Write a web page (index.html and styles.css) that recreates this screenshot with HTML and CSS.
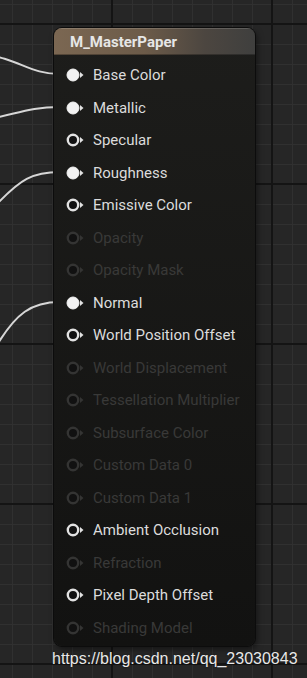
FILE: index.html
```html
<!DOCTYPE html>
<html lang="en">
<head>
    <meta charset="UTF-8">
    <meta name="viewport" content="width=device-width, initial-scale=1.0">
    <title>M_MasterPaper</title>
    <link rel="stylesheet" href="styles.css">
</head>
<body>
    <svg class="wires" width="70" height="678" viewBox="0 0 70 678">
        <path d="M-20,54 C20,58 28,74 60,74" />
        <path d="M-20,121 C18,114 28,107 60,107" />
        <path d="M-2,203 C20,180 32,172 60,172" />
        <path d="M-6,350 C16,312 32,302 60,302" />
    </svg>

    <div class="canvas">
        <div class="node">
            <div class="node-header">M_MasterPaper</div>
            <ul class="pins">
                <li class="pin linked"><svg class="pin-icon" viewBox="0 0 20 16"><circle cx="7" cy="8" r="6"/><polygon points="14,5 17.5,8 14,11"/></svg>Base Color</li>
                <li class="pin linked"><svg class="pin-icon" viewBox="0 0 20 16"><circle cx="7" cy="8" r="6"/><polygon points="14,5 17.5,8 14,11"/></svg>Metallic</li>
                <li class="pin"><svg class="pin-icon" viewBox="0 0 20 16"><circle cx="7" cy="8" r="5.2"/><polygon points="14,5 17.5,8 14,11"/></svg>Specular</li>
                <li class="pin linked"><svg class="pin-icon" viewBox="0 0 20 16"><circle cx="7" cy="8" r="6"/><polygon points="14,5 17.5,8 14,11"/></svg>Roughness</li>
                <li class="pin"><svg class="pin-icon" viewBox="0 0 20 16"><circle cx="7" cy="8" r="5.2"/><polygon points="14,5 17.5,8 14,11"/></svg>Emissive Color</li>
                <li class="pin off"><svg class="pin-icon" viewBox="0 0 20 16"><circle cx="7" cy="8" r="5.2"/><polygon points="14,5 17.5,8 14,11"/></svg>Opacity</li>
                <li class="pin off"><svg class="pin-icon" viewBox="0 0 20 16"><circle cx="7" cy="8" r="5.2"/><polygon points="14,5 17.5,8 14,11"/></svg>Opacity Mask</li>
                <li class="pin linked"><svg class="pin-icon" viewBox="0 0 20 16"><circle cx="7" cy="8" r="6"/><polygon points="14,5 17.5,8 14,11"/></svg>Normal</li>
                <li class="pin"><svg class="pin-icon" viewBox="0 0 20 16"><circle cx="7" cy="8" r="5.2"/><polygon points="14,5 17.5,8 14,11"/></svg>World Position Offset</li>
                <li class="pin off"><svg class="pin-icon" viewBox="0 0 20 16"><circle cx="7" cy="8" r="5.2"/><polygon points="14,5 17.5,8 14,11"/></svg>World Displacement</li>
                <li class="pin off"><svg class="pin-icon" viewBox="0 0 20 16"><circle cx="7" cy="8" r="5.2"/><polygon points="14,5 17.5,8 14,11"/></svg>Tessellation Multiplier</li>
                <li class="pin off"><svg class="pin-icon" viewBox="0 0 20 16"><circle cx="7" cy="8" r="5.2"/><polygon points="14,5 17.5,8 14,11"/></svg>Subsurface Color</li>
                <li class="pin off"><svg class="pin-icon" viewBox="0 0 20 16"><circle cx="7" cy="8" r="5.2"/><polygon points="14,5 17.5,8 14,11"/></svg>Custom Data 0</li>
                <li class="pin off"><svg class="pin-icon" viewBox="0 0 20 16"><circle cx="7" cy="8" r="5.2"/><polygon points="14,5 17.5,8 14,11"/></svg>Custom Data 1</li>
                <li class="pin"><svg class="pin-icon" viewBox="0 0 20 16"><circle cx="7" cy="8" r="5.2"/><polygon points="14,5 17.5,8 14,11"/></svg>Ambient Occlusion</li>
                <li class="pin off"><svg class="pin-icon" viewBox="0 0 20 16"><circle cx="7" cy="8" r="5.2"/><polygon points="14,5 17.5,8 14,11"/></svg>Refraction</li>
                <li class="pin"><svg class="pin-icon" viewBox="0 0 20 16"><circle cx="7" cy="8" r="5.2"/><polygon points="14,5 17.5,8 14,11"/></svg>Pixel Depth Offset</li>
                <li class="pin off"><svg class="pin-icon" viewBox="0 0 20 16"><circle cx="7" cy="8" r="5.2"/><polygon points="14,5 17.5,8 14,11"/></svg>Shading Model</li>
            </ul>
        </div>
        <div class="watermark">https://blog.csdn.net/qq_23030843</div>
    </div>
</body>
</html>
```

FILE: styles.css
```css
html, body {
    height: 100%;
}
body {
    margin: 0;
    overflow: hidden;
    font-family: Roboto, 'Noto Sans', sans-serif;
    background-color: #262626;
    background-image:
        linear-gradient(to right, #141414 2px, transparent 2px),
        linear-gradient(to bottom, #141414 2px, transparent 2px),
        linear-gradient(to right, #303030 1px, transparent 1px),
        linear-gradient(to bottom, #303030 1px, transparent 1px);
    background-size: 160px 160px, 160px 160px, 20px 20px, 20px 20px;
    background-position: 111px 0, 0 23px, 12px 0, 0 4px;
}
.wires {
    position: absolute;
    left: 0;
    top: 0;
}
.wires path {
    fill: none;
    stroke: #d6d6d6;
    stroke-width: 2;
}
.canvas {
    position: relative;
    padding: 28px 0 0 54px;
}
.node {
    width: 201px;
    border-radius: 8px;
    background: linear-gradient(to bottom, #1d1d1b, #121211);
    box-shadow: 0 0 0 1px #0c0c0c, 2px 3px 6px rgba(0, 0, 0, 0.5);
    overflow: hidden;
}
.node-header {
    height: 27px;
    line-height: 28px;
    padding-left: 16px;
    font-size: 15px;
    font-weight: bold;
    color: #e6e6e6;
    background: linear-gradient(to right, #7b6752 0%, #6c5b49 45%, #4c4640 75%, #3f3f3e 100%);
    box-shadow: inset 0 1px 0 rgba(255, 255, 255, 0.15), inset 0 -1px 0 rgba(0, 0, 0, 0.3);
}
.pins {
    list-style: none;
    margin: 0;
    padding: 4px 0 2px 0;
}
.pin {
    display: flex;
    align-items: center;
    height: 32.5px;
    padding-left: 12px;
    font-size: 15px;
    color: #dcdcdc;
    white-space: nowrap;
}
.pin-icon {
    width: 20px;
    height: 16px;
    margin-right: 7px;
    flex-shrink: 0;
}
.pin-icon circle {
    fill: #111;
    stroke: #e2e2e2;
    stroke-width: 2.4;
}
.pin-icon polygon {
    fill: #e2e2e2;
}
.pin.linked .pin-icon circle {
    fill: #f2f2f2;
    stroke: #f2f2f2;
    stroke-width: 1;
}
.pin.off {
    color: #393938;
}
.pin.off .pin-icon circle {
    stroke: #343433;
}
.pin.off .pin-icon polygon {
    fill: #343433;
}
.watermark {
    margin: 4px 0 0 -2px;
    font-family: 'Liberation Sans', Arial, sans-serif;
    font-size: 16px;
    color: #e8e8e8;
    text-shadow: 0 0 2px rgba(0, 0, 0, 0.6);
}
```
